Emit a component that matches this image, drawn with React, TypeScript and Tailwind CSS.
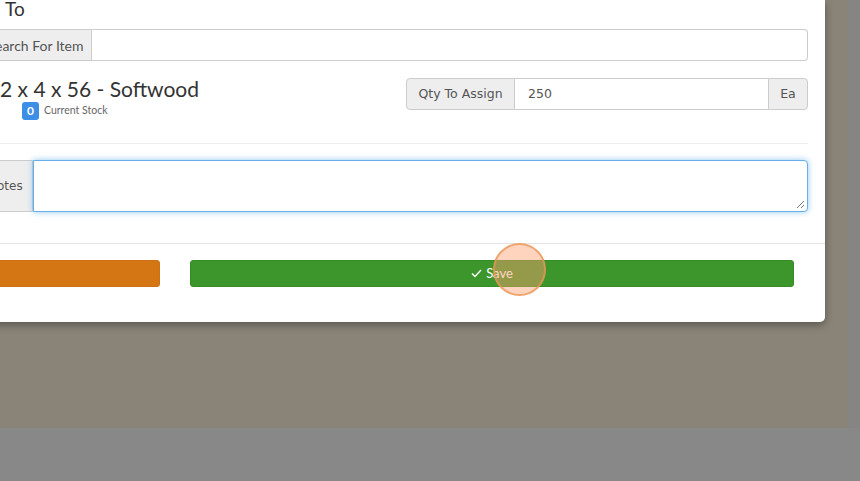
import React from "react";

export default function App() {
  return (
    <div className="w-[860px] h-[481px] overflow-hidden bg-[#888888] flex flex-col">
      <div className="h-[428px] flex bg-[#8a8478]">
        <div className="w-[848px] shrink-0">
          <div className="relative -ml-[38px] w-[863px] h-[322px] bg-white rounded-br-[5px] shadow-[0_3px_9px_rgba(0,0,0,0.35)] flex flex-col">
            {/* body */}
            <div className="pl-[17px] pr-[17px] h-[244px] border-b border-[#e5e5e5] flex flex-col">
              <div className="h-[20px] flex items-start text-[19px] leading-[17px] text-[#333]" style={{ fontFamily: "Lato, sans-serif" }}>
                <div className="w-[21px] shrink-0 flex justify-end whitespace-nowrap">
                  <span>Assign</span>
                </div>
                <span className="ml-[5px]">To</span>
              </div>
              {/* search */}
              <div className="mt-[9px] h-[32px] flex">
                <div className="h-full w-[113px] shrink-0 bg-[#eeeeee] border border-[#cccccc] rounded-l-[4px] flex items-center justify-center text-[14px] text-[#555]" style={{ fontFamily: "Lato, sans-serif" }}>
                  Search For Item
                </div>
                <div className="flex-1 h-full border border-l-0 border-[#cccccc] rounded-r-[4px] bg-white" />
              </div>
              {/* product row */}
              <div className="mt-[17px] h-[42px] flex">
                <div className="flex-1 flex flex-col">
                  <div className="ml-[21px] text-[21px] leading-[22px] text-[#333]" style={{ fontFamily: "Lato, sans-serif" }}>
                    2 x 4 x 56 - Softwood
                  </div>
                  <div className="mt-[2px] ml-[43px] flex items-center gap-[5px]">
                    <span className="w-[17px] h-[18px] rounded-[3px] bg-[#3d8fe6] text-white text-[12px] font-bold flex items-center justify-center" style={{ fontFamily: "Lato, sans-serif" }}>0</span>
                    <span className="text-[10.5px] text-[#666]" style={{ fontFamily: "Lato, sans-serif" }}>Current Stock</span>
                  </div>
                </div>
                <div className="w-[402px] h-[32px] flex" style={{ fontFamily: "'DejaVu Sans', Verdana, sans-serif" }}>
                  <div className="w-[109px] shrink-0 h-full bg-[#eeeeee] border border-[#cccccc] rounded-l-[4px] flex items-center justify-center text-[12.5px] text-[#555]">
                    Qty To Assign
                  </div>
                  <div className="flex-1 h-full border-y border-[#cccccc] flex items-center pl-[13px] text-[12.5px] text-[#555]">
                    250
                  </div>
                  <div className="w-[40px] shrink-0 h-full bg-[#eeeeee] border border-[#cccccc] rounded-r-[4px] flex items-center justify-center text-[12.5px] text-[#555]">
                    Ea
                  </div>
                </div>
              </div>
              <div className="mt-[23px] h-px bg-[#eeeeee]" />
              {/* notes */}
              <div className="mt-[16px] h-[52px] flex" style={{ fontFamily: "'DejaVu Sans', Verdana, sans-serif" }}>
                <div className="w-[54px] shrink-0 h-full bg-[#eeeeee] border border-[#cccccc] rounded-l-[4px] flex items-center justify-start pl-[8px] text-[12px] text-[#555]">
                  Notes
                </div>
                <div className="relative flex-1 h-full border border-[#66afe9] rounded-r-[4px] bg-white shadow-[0_0_6px_rgba(102,175,233,0.7)]">
                  <svg className="absolute right-[2px] bottom-[2px]" width="9" height="9" viewBox="0 0 9 9">
                    <path d="M1 8 L8 1 M5 8 L8 5" stroke="#777" strokeWidth="1" />
                  </svg>
                </div>
              </div>
            </div>
            {/* footer */}
            <div className="pl-[31px] pr-[31px] pt-[16px] flex gap-[30px]">
              <div className="flex-1 h-[27px] bg-[#d57615] border border-[#cf7012] rounded-[3px]" />
              <div className="w-[604px] shrink-0 h-[27px] bg-[#3d962b] border border-[#358b25] rounded-[3px] flex items-center justify-center gap-[4px] text-white text-[13px]" style={{ fontFamily: "Lato, sans-serif" }}>
                <svg width="11" height="9" viewBox="0 0 11 9">
                  <path d="M1 4.5 L4 7.5 L10 1" stroke="white" strokeWidth="1.4" fill="none" />
                </svg>
                <span>Save</span>
              </div>
            </div>
            {/* click highlight */}
            <div className="absolute left-[531px] top-[243px] w-[53px] h-[53px] rounded-full bg-[rgba(255,160,110,0.45)] border-2 border-[rgba(232,150,85,0.75)]" />
          </div>
        </div>
        <div className="flex-1 bg-[#868584]" />
      </div>
    </div>
  );
}
